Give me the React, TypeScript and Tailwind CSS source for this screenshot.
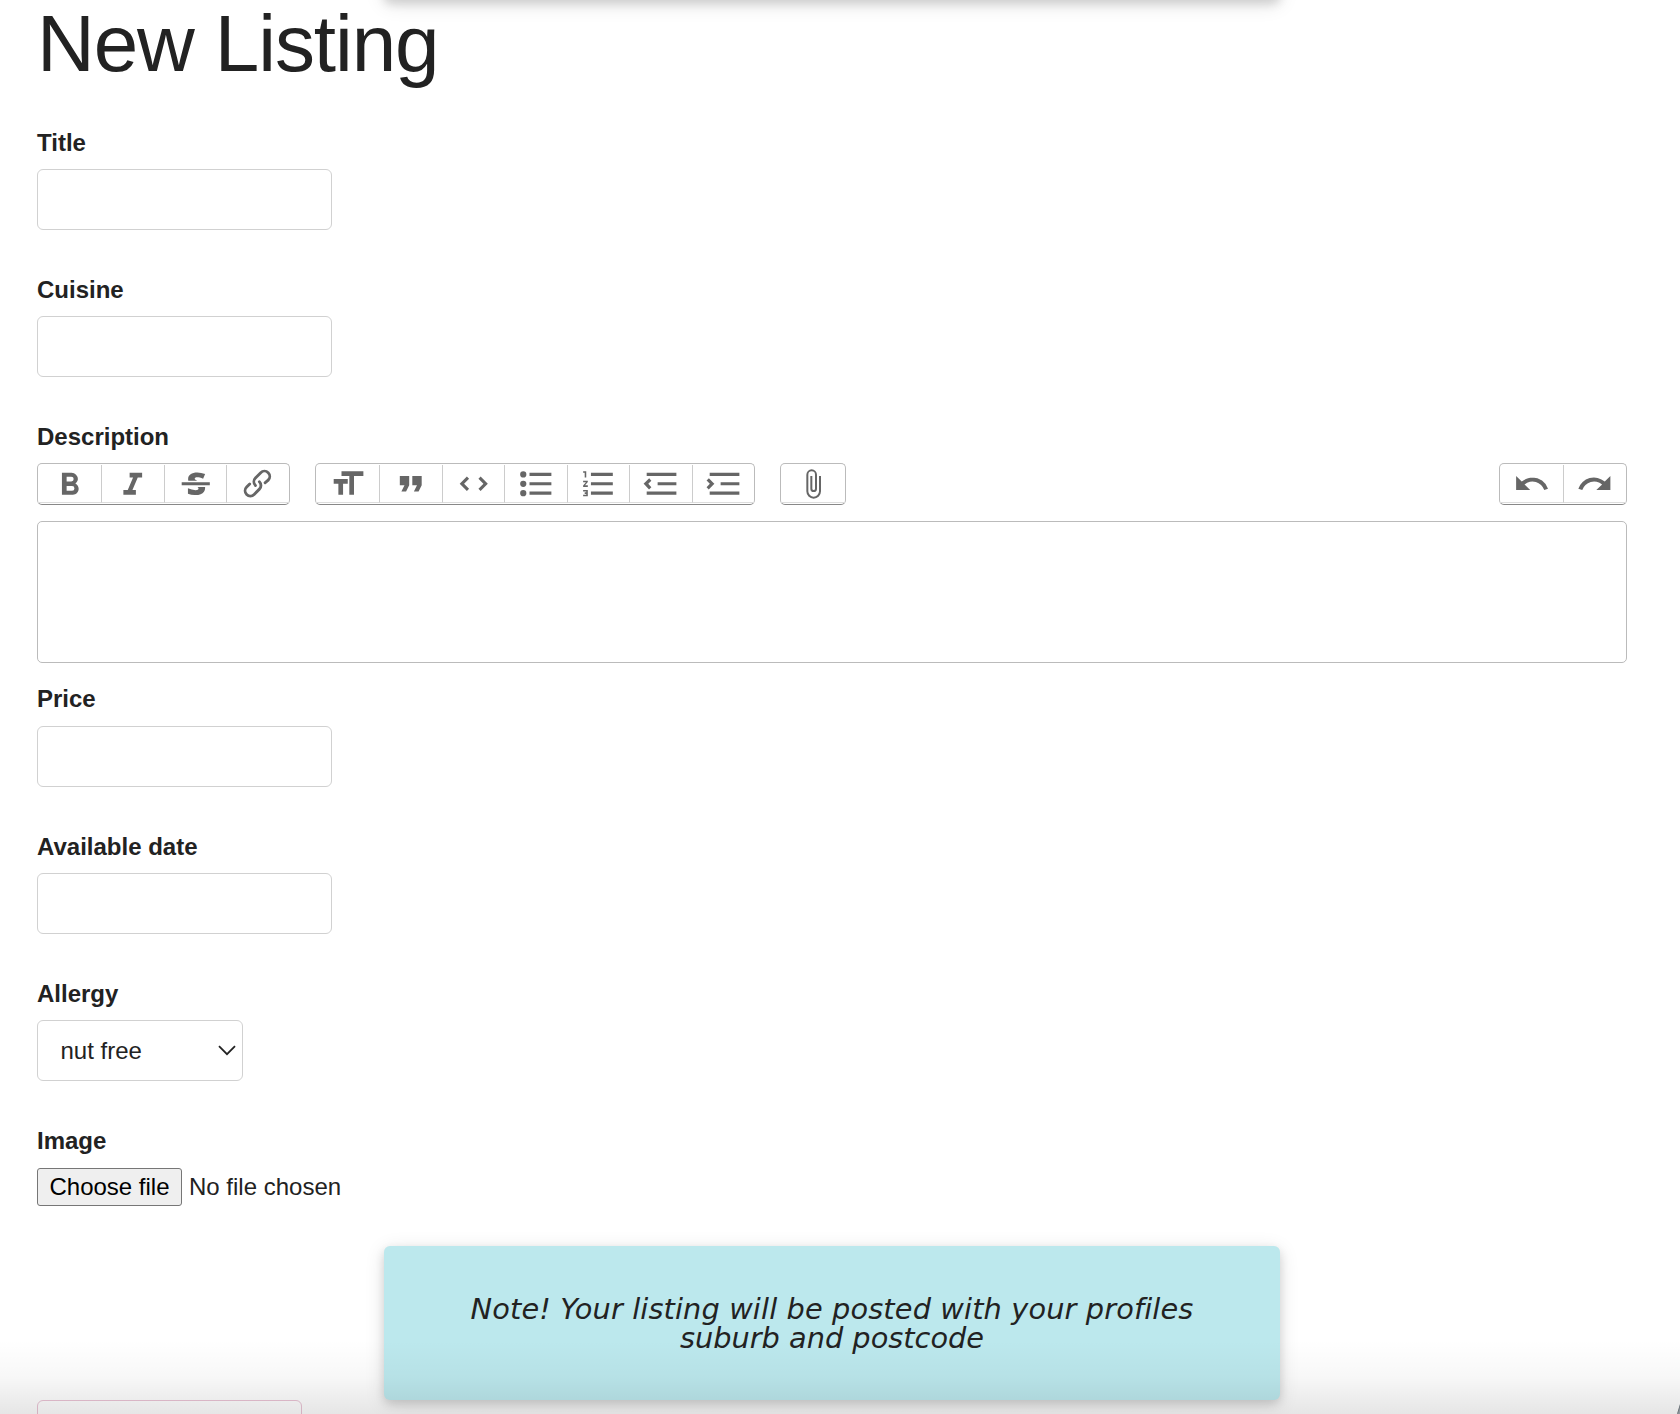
import type { ReactNode } from "react";

const icons = {
  bold: "M15.6 11.8c1-.7 1.6-1.8 1.6-2.8a4 4 0 0 0-4-4H7v14h7c2.1 0 3.7-1.7 3.7-3.8 0-1.5-.8-2.8-2.1-3.4zM10 7.5h3a1.5 1.5 0 1 1 0 3h-3v-3zm3.5 9H10v-3h3.5a1.5 1.5 0 1 1 0 3z",
  italic: "M10 5v3h2.2l-3.4 8H6v3h8v-3h-2.2l3.4-8H18V5h-8z",
  strike: "M12.73 14l.28.14c.26.15.45.3.57.44.12.14.18.3.18.5 0 .3-.15.56-.44.75-.3.2-.76.3-1.39.3A13.52 13.52 0 0 1 7 14.95v3.37a10.64 10.64 0 0 0 4.84.88c1.26 0 2.35-.19 3.28-.56.93-.37 1.64-.9 2.14-1.57s.74-1.45.74-2.32c0-.26-.02-.51-.06-.75h-5.21zm-5.5-4c-.08-.34-.12-.7-.12-1.1 0-1.29.52-2.3 1.58-3.02 1.05-.72 2.5-1.08 4.34-1.08 1.62 0 3.28.34 4.97 1l-1.3 2.93c-1.47-.6-2.73-.9-3.8-.9-.55 0-.96.08-1.2.26-.26.17-.38.38-.38.64 0 .27.16.52.48.74.17.12.53.3 1.05.53H7.23zM3 13h18v-2H3v2z",
  link: "M9.88 13.7a4.3 4.3 0 0 1 0-6.07l3.37-3.37a4.26 4.26 0 0 1 6.07 0 4.3 4.3 0 0 1 0 6.06l-1.96 1.72a.91.91 0 1 1-1.3-1.3l1.97-1.71a2.46 2.46 0 0 0-3.48-3.48l-3.38 3.37a2.46 2.46 0 0 0 0 3.48.91.91 0 1 1-1.3 1.3zM4.25 19.46a4.3 4.3 0 0 1 0-6.07l1.93-1.9a.91.91 0 1 1 1.3 1.3l-1.93 1.9a2.46 2.46 0 0 0 3.48 3.48l3.37-3.38c.96-.96.96-2.52 0-3.48a.91.91 0 1 1 1.3-1.3 4.3 4.3 0 0 1 0 6.07l-3.38 3.38a4.26 4.26 0 0 1-6.07 0z",
  heading: "M12 9v3H9v7H6v-7H3V9h9zM8 4h14v3h-6v12h-3V7H8V4z",
  quote: "M6 17h3l2-4V7H5v6h3zm8 0h3l2-4V7h-6v6h3z",
  code: "M18.2 12L15 15.2l1.4 1.4L21 12l-4.6-4.6L15 8.8l3.2 3.2zM5.8 12L9 8.8 7.6 7.4 3 12l4.6 4.6L9 15.2 5.8 12z",
  bullets: "M4 4a2 2 0 1 0 0 4 2 2 0 0 0 0-4zm0 6a2 2 0 1 0 0 4 2 2 0 0 0 0-4zm0 6a2 2 0 1 0 0 4 2 2 0 0 0 0-4zm4 3h14v-2H8v2zm0-6h14v-2H8v2zm0-8v2h14V5H8z",
  numbers: "M2 17h2v.5H3v1h1v.5H2v1h3v-4H2v1zm1-9h1V4H2v1h1v3zm-1 3h1.8L2 13.1v.9h3v-1H3.2L5 10.9V10H2v1zm5-6v2h14V5H7zm0 14h14v-2H7v2zm0-6h14v-2H7v2z",
  outdent: "M3 19h19v-2H3v2zm7-6h12v-2H10v2zm-8.3-.3l2.8 2.9L6 14.2 4 12l2-2-1.4-1.5L1 12l.7.7zM3 5v2h19V5H3z",
  indent: "M3 19h19v-2H3v2zm7-6h12v-2H10v2zm-6.9-1L1 14.2l1.4 1.4L6 12l-.7-.7-2.8-2.8L1 9.9 3.1 12zM3 5v2h19V5H3z",
  attach: "M16.5 6v11.5a4 4 0 1 1-8 0V5a2.5 2.5 0 0 1 5 0v10.5a1 1 0 1 1-2 0V6H10v9.5a2.5 2.5 0 0 0 5 0V5a4 4 0 1 0-8 0v12.5a5.5 5.5 0 0 0 11 0V6h-1.5z",
  undo: "M12.5 8c-2.6 0-5 1-6.9 2.6L2 7v9h9l-3.6-3.6A8 8 0 0 1 20 16l2.4-.8a10.5 10.5 0 0 0-10-7.2z",
  redo: "M18.4 10.6a10.5 10.5 0 0 0-16.9 4.6L4 16a8 8 0 0 1 12.7-3.6L13 16h9V7l-3.6 3.6z",
};

type IconName = keyof typeof icons;

function ToolGroup({ names, className }: { names: IconName[]; className: string }) {
  return (
    <div className={`flex h-[42px] rounded-[5px] border border-[#bbb] border-b-[#888] pt-px ${className}`}>
      {names.map((name, i) => (
        <button
          key={name}
          type="button"
          aria-label={name}
          className={`flex h-[38px] items-center justify-center border-b border-[#ddd] ${i > 0 ? "flex-1 border-l border-l-[#ccc]" : names.length > 1 ? "w-[63px]" : "flex-1"}`}
        >
          <svg viewBox="0 0 24 24" fill="#666" className={name === "attach" ? "size-8 shrink-0" : "size-[37.5px] shrink-0"}>
            <path d={icons[name]} />
          </svg>
        </button>
      ))}
    </div>
  );
}

function Field({ label, className = "h-[147px]", children }: { label: string; className?: string; children: ReactNode }) {
  return (
    <div className={`shrink-0 ${className}`}>
      <div className="mb-[8px] h-[36px] text-[24px] leading-[36px] font-bold">{label}</div>
      {children}
    </div>
  );
}

function TextInput() {
  return <input type="text" className="block h-[61px] w-[295px] rounded-[6px] border border-[#d1d1d1] bg-white px-5 outline-none" />;
}

export default function App() {
  return (
    <div className="relative h-[1414px] w-[1680px] overflow-hidden bg-white font-['Liberation_Sans',Arial,sans-serif] text-[#222]">
      <div className="absolute -top-[154px] left-[384px] h-[154px] w-[896px] rounded-[6px] shadow-[0_4px_10px_rgba(0,0,0,0.12),0_4px_20px_rgba(0,0,0,0.12)]" />
      <main className="flex h-full flex-col pr-[53px] pl-[37px]">
        <h1 className="h-[125px] shrink-0 text-[80px] leading-[88px] tracking-[-1.1px] whitespace-nowrap">New Listing</h1>
        <Field label="Title"><TextInput /></Field>
        <Field label="Cuisine"><TextInput /></Field>
        <Field label="Description" className="h-[262px]">
          <div className="flex">
            <ToolGroup names={["bold", "italic", "strike", "link"]} className="w-[253px]" />
            <ToolGroup names={["heading", "quote", "code", "bullets", "numbers", "outdent", "indent"]} className="ml-[25px] w-[440px]" />
            <ToolGroup names={["attach"]} className="ml-[25px] w-[66px]" />
            <ToolGroup names={["undo", "redo"]} className="ml-auto w-[128px]" />
          </div>
          <div className="mt-[16px] h-[142px] rounded-[5px] border border-[#bbb]" />
        </Field>
        <Field label="Price" className="h-[148px] [&>input]:mt-[9px]"><TextInput /></Field>
        <Field label="Available date"><TextInput /></Field>
        <Field label="Allergy">
          <div className="flex h-[61px] w-[206px] items-center justify-between rounded-[6px] border border-[#d1d1d1] pr-[6px] pl-[22.5px] text-[24px]">
            <span>nut free</span>
            <svg width="18" height="12" viewBox="0 0 18 12" fill="none" stroke="#222" strokeWidth="1.8">
              <path d="M1 1.2l8 8 8-8" />
            </svg>
          </div>
        </Field>
        <Field label="Image" className="h-[122px]">
          <div className="flex h-[39px] items-center pt-px text-[24px] leading-[36px]">
            <button type="button" className="h-[38px] w-[145px] rounded-[3px] border border-[#767676] bg-[#efefef] text-black">Choose file</button>
            <span className="ml-[7px]">No file chosen</span>
          </div>
        </Field>
        <div className="mt-px ml-[347px] flex h-[154px] w-[896px] shrink-0 items-center justify-center rounded-[6px] bg-[#bce8ed] pt-[2px] text-center font-['DejaVu_Sans',Verdana,sans-serif] text-[28.8px] leading-[29px] italic shadow-[0_4px_10px_rgba(0,0,0,0.12),0_4px_20px_rgba(0,0,0,0.12)]">
          <p>
            <span className="tracking-[0.13px]">Note! Your listing will be posted with your profiles</span>
            <br />
            suburb and postcode
          </p>
        </div>
        <div className="h-[61px] w-[265px] shrink-0 rounded-[6px] border border-[#eac4d5]" />
      </main>
      <div className="pointer-events-none absolute inset-x-0 bottom-0 h-[74px] bg-linear-to-b from-black/0 via-black/[0.03] to-black/10" />
      <div className="absolute top-[1365px] left-[1675.5px] size-[120px] rounded-full border border-[#6f757a] bg-[#8d969e]" />
    </div>
  );
}
